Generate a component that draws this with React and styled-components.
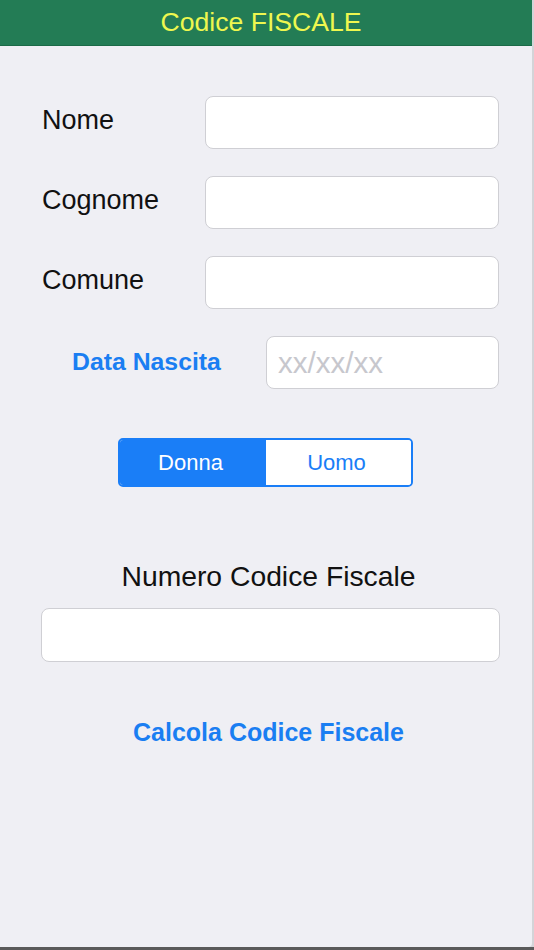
import React, { useState } from "react";
import styled, { createGlobalStyle } from "styled-components";

const GlobalStyle = createGlobalStyle`
  html, body {
    margin: 0;
    padding: 0;
    background-color: #d4d4d8;
  }
  * {
    box-sizing: border-box;
  }
`;

const Screen = styled.div`
  width: 532px;
  height: 947px;
  background-color: #efeff4;
  display: flex;
  flex-direction: column;
  font-family: "Liberation Sans", Arial, sans-serif;
  border-bottom-right-radius: 4px;
  overflow: hidden;
`;

const BottomStrip = styled.div`
  height: 3px;
  background-color: #5a5a5a;
`;

const Header = styled.div`
  height: 46px;
  background-color: #237c55;
  border-bottom: 1px solid #1b6a47;
  display: flex;
  justify-content: center;
  align-items: center;
`;

const Title = styled.h1`
  margin: 0;
  padding-right: 10px;
  color: #eef74f;
  font-size: 26.6px;
  font-weight: normal;
`;

const Content = styled.div`
  padding: 50px 33px 0 42px;
  display: flex;
  flex-direction: column;
`;

const Form = styled.div`
  display: flex;
  flex-direction: column;
  gap: 27px;
`;

const Row = styled.div`
  height: 53px;
  display: flex;
  align-items: center;
  justify-content: space-between;
`;

const Label = styled.label`
  font-size: 27px;
  color: #111;
  margin-top: -5px;
  padding-left: ${(p) => p.$indent || 0}px;
  font-weight: ${(p) => (p.$accent ? "bold" : "normal")};
  ${(p) => p.$accent && "color: #1a7ef2; font-size: 24.8px; margin-top: -1px;"}
`;

const Input = styled.input`
  width: ${(p) => p.$width || 294}px;
  height: 53px;
  border: 1px solid #cfcfd4;
  border-radius: 8px;
  background: #fff;
  padding: 0 11px;
  font-family: "Liberation Sans", Arial, sans-serif;
  font-size: 29.5px;
  color: #111;
  outline: none;
  &::placeholder {
    color: #c7c7cd;
  }
`;

const Segmented = styled.div`
  margin: 49px 0 0 76px;
  width: 295px;
  height: 49px;
  display: flex;
  border: 2px solid #1a7ef7;
  border-radius: 5px;
  overflow: hidden;
`;

const Segment = styled.button`
  flex: 1;
  border: none;
  border-left: ${(p) => (p.$first ? "none" : "1px solid #1a7ef7")};
  background-color: ${(p) => (p.$active ? "#1a7ef7" : "#fff")};
  color: ${(p) => (p.$active ? "#fff" : "#1a7ef7")};
  font-family: "Liberation Sans", Arial, sans-serif;
  font-size: 22px;
  cursor: pointer;
  padding: 0 4px 0 0;
`;

const SectionTitle = styled.div`
  margin-top: 73px;
  margin-left: -4px;
  text-align: center;
  font-size: 28.3px;
  color: #111;
  line-height: 32px;
`;

const WideInput = styled(Input)`
  width: 459px;
  height: 54px;
  margin: 16px 0 0 -1px;
`;

const CalcButton = styled.button`
  margin: 56px auto 0;
  border: none;
  background: none;
  color: #1a7ef2;
  font-family: "Liberation Sans", Arial, sans-serif;
  font-weight: bold;
  font-size: 25px;
  cursor: pointer;
  padding: 0 4px 0 0;
`;

const fields = ["Nome", "Cognome", "Comune"];

const App = () => {
  const [gender, setGender] = useState("Donna");

  return (
    <>
      <GlobalStyle />
      <Screen>
        <Header>
          <Title>Codice FISCALE</Title>
        </Header>
        <Content>
          <Form>
            {fields.map((f) => (
              <Row key={f}>
                <Label>{f}</Label>
                <Input />
              </Row>
            ))}
            <Row>
              <Label $accent $indent={30}>
                Data Nascita
              </Label>
              <Input $width={233} placeholder="xx/xx/xx" />
            </Row>
          </Form>
          <Segmented>
            {["Donna", "Uomo"].map((g, i) => (
              <Segment
                key={g}
                $first={i === 0}
                $active={gender === g}
                onClick={() => setGender(g)}
              >
                {g}
              </Segment>
            ))}
          </Segmented>
          <SectionTitle>Numero Codice Fiscale</SectionTitle>
          <WideInput />
          <CalcButton>Calcola Codice Fiscale</CalcButton>
        </Content>
      </Screen>
      <BottomStrip />
    </>
  );
};

export default App;
